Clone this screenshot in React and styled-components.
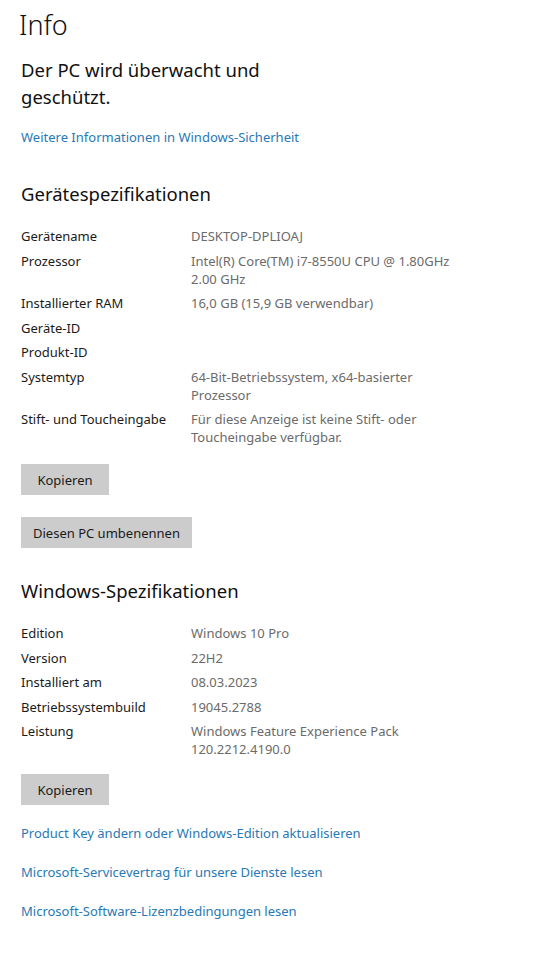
import styled, { createGlobalStyle } from "styled-components";

const GlobalStyle = createGlobalStyle`
  body {
    margin: 0;
    background: #ffffff;
    font-family: "Noto Sans", "Open Sans", sans-serif;
    color: #1a1a1a;
  }
`;

const Page = styled.div`
  width: 534px;
  height: 960px;
  overflow: hidden;
  padding: 0 0 0 21px;
  box-sizing: border-box;
`;

const Title = styled.h1`
  margin: 0 0 0 -2px;
  padding-top: 6px;
  font-size: 27px;
  font-weight: 300;
  line-height: 38px;
  color: #111;
`;

const Status = styled.p`
  margin: 12px 0 0;
  font-size: 18.5px;
  line-height: 27px;
  font-weight: 400;
  color: #111;
`;

const Link = styled.a`
  display: block;
  font-size: 13px;
  line-height: 18px;
  color: #2879b4;
  text-decoration: none;
  margin-top: ${(p) => p.$top || 0}px;
`;

const Heading = styled.h2`
  margin: ${(p) => p.$top}px 0 0;
  font-size: 18.5px;
  font-weight: 400;
  line-height: 26px;
  color: #111;
`;

const Specs = styled.div`
  margin-top: 20px;
  display: grid;
  grid-template-columns: 170px 1fr;
  row-gap: 6.5px;
  font-size: 13px;
  line-height: 18px;
`;

const Label = styled.div`
  color: #1a1a1a;
`;

const Value = styled.div`
  color: #6b6b6b;
`;

const Button = styled.button`
  display: block;
  border: none;
  background: #cccccc;
  color: #1a1a1a;
  font-family: inherit;
  font-size: 13px;
  height: 31px;
  padding: 0 ${(p) => p.$pad || 16}px;
  margin-top: ${(p) => p.$top}px;
  min-width: ${(p) => p.$min || 0}px;
  cursor: pointer;
`;

const deviceSpecs = [
  ["Gerätename", ["DESKTOP-DPLIOAJ"]],
  ["Prozessor", ["Intel(R) Core(TM) i7-8550U CPU @ 1.80GHz", "2.00 GHz"]],
  ["Installierter RAM", ["16,0 GB (15,9 GB verwendbar)"]],
  ["Geräte-ID", [""]],
  ["Produkt-ID", [""]],
  ["Systemtyp", ["64-Bit-Betriebssystem, x64-basierter", "Prozessor"]],
  ["Stift- und Toucheingabe", ["Für diese Anzeige ist keine Stift- oder", "Toucheingabe verfügbar."]],
];

const windowsSpecs = [
  ["Edition", ["Windows 10 Pro"]],
  ["Version", ["22H2"]],
  ["Installiert am", ["08.03.2023"]],
  ["Betriebssystembuild", ["19045.2788"]],
  ["Leistung", ["Windows Feature Experience Pack", "120.2212.4190.0"]],
];

const SpecList = ({ rows }) => (
  <Specs>
    {rows.flatMap(([label, lines]) => [
      <Label key={label}>{label}</Label>,
      <Value key={label + "-v"}>
        {lines.map((l, i) => (
          <div key={i}>{l || "\u00a0"}</div>
        ))}
      </Value>,
    ])}
  </Specs>
);

const App = () => {
  return (
    <Page>
      <GlobalStyle />
      <Title>Info</Title>
      <Status>
        Der PC wird überwacht und
        <br />
        geschützt.
      </Status>
      <Link $top={18}>Weitere Informationen in Windows-Sicherheit</Link>

      <Heading $top={35}>Gerätespezifikationen</Heading>
      <SpecList rows={deviceSpecs} />
      <Button $top={18} $min={88}>Kopieren</Button>
      <Button $top={22} $pad={12}>Diesen PC umbenennen</Button>

      <Heading $top={30}>Windows-Spezifikationen</Heading>
      <SpecList rows={windowsSpecs} />
      <Button $top={16} $min={88}>Kopieren</Button>

      <Link $top={19}>Product Key ändern oder Windows-Edition aktualisieren</Link>
      <Link $top={21}>Microsoft-Servicevertrag für unsere Dienste lesen</Link>
      <Link $top={21}>Microsoft-Software-Lizenzbedingungen lesen</Link>
    </Page>
  );
};

export default App;
